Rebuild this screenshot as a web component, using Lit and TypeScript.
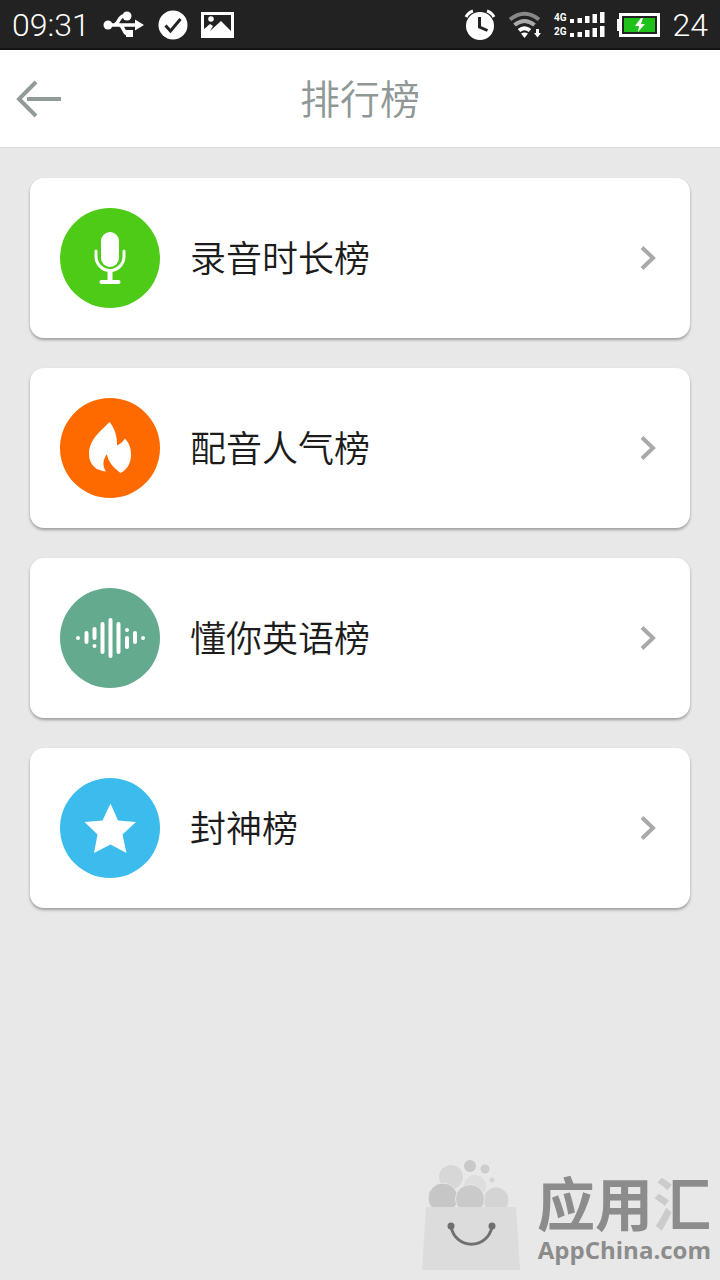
import { LitElement, html, svg, css } from "lit";
import { customElement, property } from "lit/decorators.js";

const icons = {
  mic: svg`
    <rect x="41" y="24" width="18" height="35" rx="9" fill="#fff" />
    <path d="M36 43v5.500a14 14 0 0 0 28 0V43" fill="none" stroke="#fff" stroke-width="3" stroke-linecap="round" />
    <path d="M50 63v11" stroke="#fff" stroke-width="5" />
    <path d="M41.500 74h17" stroke="#fff" stroke-width="4" stroke-linecap="round" />`,
  flame: svg`
    <path fill="#fff" d="M49.500 24C42 32 29 41 29 56c0 11 8 17 17 17.500 -4-6-3-12 1-17.500 1 8 7 14 13.500 19C67 72 71 65 71 57c0-7-2-12-6-16.500C63 44 60 46 57 47.500 57.500 38 54 29 49.500 24Z" />`,
  wave: svg`
    <g stroke="#fff" stroke-width="4" stroke-linecap="round">
      <path d="M18 50h.01M83 50h.01" />
      <path d="M26.500 45v9M34.500 41v9M34.500 58v.01M42.500 36v28M50.500 32v36M58.500 36v28M67 42v.01M67 50v9M75 45v9" />
    </g>`,
  star: svg`
    <path fill="#fff" d="M50.500 25.500l7.500 17 18 1.500-13.500 12.500L66.500 75l-16-8.500L34 75l3.500-18.500L24.500 44l18-1.500Z" />`,
};

@customElement("status-bar")
class StatusBar extends LitElement {
  static styles = css`
    :host {
      display: block;
    }
    .bar {
      display: flex;
      align-items: center;
      justify-content: space-between;
      box-sizing: border-box;
      height: 50px;
      padding: 2px 12px 0;
      border-bottom: 2px solid #141414;
      background: #222;
      color: #fff;
      font: 300 32px/46px Roboto, sans-serif;
    }
    .group {
      display: flex;
      align-items: center;
      gap: 12px;
    }
    .start {
      gap: 13px;
    }
    svg {
      display: block;
    }
    .signals {
      display: grid;
      gap: 2px;
    }
    .signal {
      display: flex;
      align-items: center;
      gap: 3px;
      font: 700 10px/12px Roboto, sans-serif;
    }
  `;

  private signal(label: string) {
    return html`<div class="signal">
      <span>${label}</span>
      <svg width="35" height="12" viewBox="0 0 35 12" fill="#fff">
        <path d="M0 7h4v4H0zM7.500 6h4.500v5H7.500zM15 4h4.500v7H15zM22.500 2H27v9h-4.500zM30 0h4.500v11H30z" />
      </svg>
    </div>`;
  }

  render() {
    return html`<div class="bar">
      <div class="group start">
        <time>09:31</time>
        <svg width="42" height="28" viewBox="0 0 42 28" fill="none" stroke="#fff" stroke-width="3.500">
          <path d="M4 14h30M11 14c5 0 4-9 10-9h4M16 14c5 0 4 9 9 9h4" />
          <g fill="#fff" stroke="none">
            <circle cx="5" cy="14" r="4.500" />
            <circle cx="24" cy="5" r="4.500" />
            <path d="M23 19h7v7h-7zM32 8.500l9 5.500-9 5.500z" />
          </g>
        </svg>
        <svg width="30" height="30" viewBox="0 0 30 30">
          <circle cx="15" cy="15" r="14.500" fill="#fff" />
          <path d="M7.500 15.500l5 5.500L22.500 9" fill="none" stroke="#222" stroke-width="3" />
        </svg>
        <svg width="33" height="26" viewBox="0 0 33 26">
          <rect x="1.500" y="1.500" width="30" height="23" fill="none" stroke="#fff" stroke-width="3" />
          <circle cx="10" cy="7" r="2.800" fill="#fff" />
          <path fill="#fff" d="M2 25v-7l7-6 3 2-3 5 11-10 12 12v4z" />
        </svg>
      </div>
      <div class="group">
        <svg width="32" height="32" viewBox="0 0 32 32">
          <circle cx="16" cy="17" r="14" fill="#fff" />
          <path d="M2 8C3.500 5 5.500 3 9 2M30 8c-1.500-3-3.500-5-7-6" fill="none" stroke="#fff" stroke-width="3" />
          <path d="M15.500 8v10l8 3.500" fill="none" stroke="#222" stroke-width="3" />
        </svg>
        <svg width="34" height="28" viewBox="0 0 34 28" fill="none" stroke-width="4">
          <path d="M2 8.500Q16.500-3 31 8.500" stroke="#888" />
          <path d="M6.500 14Q16.500 6 26.500 14" stroke="#aaa" />
          <path d="M11 19.500q5.500-4.500 11 0" stroke="#fff" />
          <path d="M13 22.500q3.500-2 7 0L16.500 27zM28 18h3v4h2l-3.500 4.500L26 22h2z" fill="#fff" />
        </svg>
        <div class="signals">${this.signal("4G")}${this.signal("2G")}</div>
        <svg width="44" height="26" viewBox="0 0 44 26">
          <path d="M0 7h4v12H0z" fill="#fff" />
          <rect x="3.500" y="2.500" width="38" height="21" fill="#222" stroke="#fff" stroke-width="3" />
          <rect x="7" y="6" width="31" height="14" fill="#1ec21a" />
          <path d="M24 6l-6 8h4l-1 6 7-8h-4l2-6z" fill="#fff" />
        </svg>
        <span>24</span>
      </div>
    </div>`;
  }
}

@customElement("rank-card")
class RankCard extends LitElement {
  @property() label = "";
  @property() icon: keyof typeof icons = "mic";

  static styles = css`
    :host {
      display: block;
    }
    .card {
      display: flex;
      align-items: center;
      gap: 30px;
      padding: 30px;
      border-radius: 14px;
      background: #fff;
      box-shadow: 0 2px 3px rgba(0, 0, 0, 0.32);
      color: #1c1c1c;
      font: 350 36px/52px "Noto Sans CJK SC", sans-serif;
      text-decoration: none;
    }
    svg {
      display: block;
      flex: none;
    }
    .label {
      flex: 1;
      padding-bottom: 4px;
    }
    .mic {
      background: #4dcb17;
    }
    .flame {
      background: #ff6a00;
    }
    .wave {
      background: #64aa8e;
    }
    .star {
      background: #3cbcec;
    }
    .icon {
      border-radius: 50%;
    }
  `;

  render() {
    return html`<a class="card" href="#">
      <svg class="icon ${this.icon}" width="100" height="100" viewBox="0 0 100 100" aria-hidden="true">
        ${icons[this.icon]}
      </svg>
      <span class="label">${this.label}</span>
      <svg width="24" height="28" viewBox="0 0 24 28" aria-hidden="true">
        <path d="M6 3.500L17 14 6 24.500" fill="none" stroke="#a9a9a9" stroke-width="4" />
      </svg>
    </a>`;
  }
}

@customElement("store-mark")
class StoreMark extends LitElement {
  static styles = css`
    :host {
      display: flex;
      justify-content: flex-end;
      align-items: flex-end;
      gap: 16px;
      padding: 0 9px 8px 0;
      color: #8c8c8c;
    }
    svg {
      display: block;
    }
    .names {
      display: grid;
      justify-items: end;
    }
    .name {
      font: 700 58px/60px "Liberation Sans", "Noto Sans CJK SC", sans-serif;
    }
    .last {
      background: linear-gradient(90deg, #cbcbcb 32%, #8c8c8c 32%);
      background-clip: text;
      -webkit-background-clip: text;
      color: transparent;
    }
    .site {
      padding-bottom: 8px;
      font: 700 24px/28px "Open Sans", sans-serif;
    }
  `;

  render() {
    return html`
      <svg width="102" height="114" viewBox="0 0 102 114" aria-hidden="true">
        <circle cx="32" cy="19" r="12" fill="#d7d7d7" />
        <circle cx="56" cy="28" r="11" fill="#dedede" />
        <circle cx="51" cy="8" r="6" fill="#c9c9c9" />
        <circle cx="66" cy="11" r="4.500" fill="#cdcdcd" />
        <circle cx="73" cy="22" r="2.500" fill="#d4d4d4" />
        <g stroke="#e8e8e8">
          <circle cx="77" cy="42" r="13" fill="#d4d4d4" />
          <circle cx="24" cy="40" r="15" fill="#c6c6c6" />
          <circle cx="51" cy="41" r="14.500" fill="#cacaca" />
        </g>
        <path d="M7 49h90l4 63H3z" fill="#dcdcdc" />
        <path d="M32 69c5 23 36 23 41 0" fill="none" stroke="#707070" stroke-width="3" />
        <circle cx="32" cy="68" r="3.500" fill="#707070" />
        <circle cx="73" cy="68" r="3.500" fill="#707070" />
      </svg>
      <div class="names">
        <span class="name">应用<span class="last">汇</span></span>
        <span class="site">AppChina.com</span>
      </div>
    `;
  }
}

@customElement("app-root")
class AppRoot extends LitElement {
  static styles = css`
    :host {
      display: flex;
      flex-direction: column;
      min-height: 100vh;
      background: #e8e8e8;
    }
    .header {
      display: grid;
      grid-template-columns: 80px 1fr 80px;
      align-items: center;
      height: 97px;
      border-bottom: 1px solid #dcdcdc;
      background: #fff;
    }
    .back {
      display: block;
      padding: 14px;
      border: 0;
      background: none;
    }
    .back svg {
      display: block;
    }
    .title {
      margin: 0;
      padding-bottom: 4px;
      color: #8f9896;
      font: 350 40px/58px "Noto Sans CJK SC", sans-serif;
      text-align: center;
    }
    .list {
      display: grid;
      gap: 30px;
      flex: 1;
      align-content: start;
      padding: 30px;
    }
  `;

  render() {
    return html`
      <status-bar></status-bar>
      <header class="header">
        <button class="back" aria-label="返回">
          <svg width="50" height="40" viewBox="0 0 50 40" fill="none" stroke="#939b99" stroke-width="4">
            <path d="M22 3L5 20l17 17M13 20h34" />
          </svg>
        </button>
        <h1 class="title">排行榜</h1>
      </header>
      <main class="list">
        <rank-card icon="mic" label="录音时长榜"></rank-card>
        <rank-card icon="flame" label="配音人气榜"></rank-card>
        <rank-card icon="wave" label="懂你英语榜"></rank-card>
        <rank-card icon="star" label="封神榜"></rank-card>
      </main>
      <store-mark></store-mark>
    `;
  }
}
